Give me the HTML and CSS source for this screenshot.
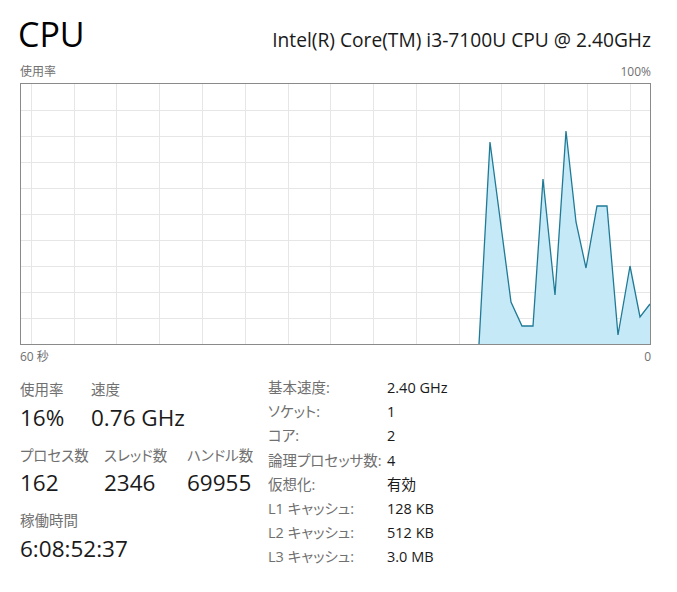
FILE: index.html
```html
<!DOCTYPE html>
<html lang="ja">
<head>
<meta charset="utf-8">
<title>CPU</title>
<link rel="stylesheet" href="styles.css">
</head>
<body>
<div class="page">
  <header class="title-row">
    <h1 class="title">CPU</h1>
    <div class="model">Intel(R) Core(TM) i3-7100U CPU @ 2.40GHz</div>
  </header>
  <div class="axis-row axis-top"><span>使用率</span><span>100%</span></div>
  <svg class="graph" width="631" height="262" viewBox="0 0 631 262">
    <g class="grid">
      <line x1="0" y1="27.5" x2="631" y2="27.5"/>
      <line x1="0" y1="53.5" x2="631" y2="53.5"/>
      <line x1="0" y1="79.5" x2="631" y2="79.5"/>
      <line x1="0" y1="105.5" x2="631" y2="105.5"/>
      <line x1="0" y1="131.5" x2="631" y2="131.5"/>
      <line x1="0" y1="157.5" x2="631" y2="157.5"/>
      <line x1="0" y1="183.5" x2="631" y2="183.5"/>
      <line x1="0" y1="209.5" x2="631" y2="209.5"/>
      <line x1="0" y1="235.5" x2="631" y2="235.5"/>
      <line x1="11.5" y1="0" x2="11.5" y2="262"/>
      <line x1="54.5" y1="0" x2="54.5" y2="262"/>
      <line x1="96.5" y1="0" x2="96.5" y2="262"/>
      <line x1="139.5" y1="0" x2="139.5" y2="262"/>
      <line x1="182.5" y1="0" x2="182.5" y2="262"/>
      <line x1="225.5" y1="0" x2="225.5" y2="262"/>
      <line x1="268.5" y1="0" x2="268.5" y2="262"/>
      <line x1="310.5" y1="0" x2="310.5" y2="262"/>
      <line x1="353.5" y1="0" x2="353.5" y2="262"/>
      <line x1="396.5" y1="0" x2="396.5" y2="262"/>
      <line x1="439.5" y1="0" x2="439.5" y2="262"/>
      <line x1="481.5" y1="0" x2="481.5" y2="262"/>
      <line x1="524.5" y1="0" x2="524.5" y2="262"/>
      <line x1="567.5" y1="0" x2="567.5" y2="262"/>
      <line x1="610.5" y1="0" x2="610.5" y2="262"/>
    </g>
    <polygon class="area" points="459,261 470,59 491,219 502,243 513,243 523,96 535,212 546,48 556,139 566,185 577,123 587,123 598,252 610,183 620,234 630,221 630,261"/>
    <polyline class="line" points="459,261 470,59 491,219 502,243 513,243 523,96 535,212 546,48 556,139 566,185 577,123 587,123 598,252 610,183 620,234 630,221"/>
    <rect class="frame" x="0.5" y="0.5" width="630" height="261"/>
  </svg>
  <div class="axis-row axis-bottom"><span>60 秒</span><span>0</span></div>
  <section class="stats">
    <div class="dynamic">
      <div class="stat-row">
        <div class="stat w71"><div class="lbl">使用率</div><div class="val">16%</div></div>
        <div class="stat"><div class="lbl">速度</div><div class="val">0.76 GHz</div></div>
      </div>
      <div class="stat-row">
        <div class="stat w84"><div class="lbl">プロセス数</div><div class="val">162</div></div>
        <div class="stat w83"><div class="lbl">スレッド数</div><div class="val">2346</div></div>
        <div class="stat"><div class="lbl">ハンドル数</div><div class="val">69955</div></div>
      </div>
      <div class="stat-row">
        <div class="stat"><div class="lbl">稼働時間</div><div class="val">6:08:52:37</div></div>
      </div>
    </div>
    <dl class="specs">
      <dt>基本速度:</dt><dd>2.40 GHz</dd>
      <dt>ソケット:</dt><dd>1</dd>
      <dt>コア:</dt><dd>2</dd>
      <dt>論理プロセッサ数:</dt><dd>4</dd>
      <dt>仮想化:</dt><dd>有効</dd>
      <dt>L1 キャッシュ:</dt><dd>128 KB</dd>
      <dt>L2 キャッシュ:</dt><dd>512 KB</dd>
      <dt>L3 キャッシュ:</dt><dd>3.0 MB</dd>
    </dl>
  </section>
</div>
</body>
</html>
```
FILE: styles.css
```css
html, body {
  margin: 0;
  padding: 0;
  background: #ffffff;
}
body {
  font-family: "Segoe UI", "Open Sans", "Noto Sans CJK JP", sans-serif;
  font-feature-settings: "palt";
  color: #1a1a1a;
}
.page {
  width: 631px;
  padding: 14px 0 0 20px;
}
.title-row {
  display: flex;
  justify-content: space-between;
  align-items: baseline;
  height: 40px;
}
.title {
  margin: 0 0 0 -2px;
  font-size: 34px;
  font-weight: 400;
  line-height: 40px;
  color: #000;
}
.model {
  font-size: 19.2px;
  line-height: 40px;
  color: #1a1a1a;
  white-space: nowrap;
}
.axis-row {
  display: flex;
  justify-content: space-between;
  font-size: 12px;
  line-height: 16px;
  height: 16px;
  color: #707070;
}
.axis-top {
  margin-top: 10px;
}
.graph {
  display: block;
  margin-top: 3px;
}
.grid line {
  stroke: #e6e6e6;
  stroke-width: 1;
}
.area {
  fill: #c6e9f8;
}
.line {
  fill: none;
  stroke: #1f7a96;
  stroke-width: 1.3;
  stroke-linejoin: miter;
}
.frame {
  fill: none;
  stroke: #8a8a8a;
  stroke-width: 1;
}
.axis-bottom {
  margin-top: 4px;
}
.stats {
  display: flex;
  margin-top: 11px;
}
.dynamic {
  width: 248px;
  padding-top: 4px;
  display: flex;
  flex-direction: column;
  gap: 13px;
}
.stat-row {
  display: flex;
}
.w71 { width: 71px; }
.w84 { width: 84px; }
.w83 { width: 83px; }
.lbl {
  font-size: 14.5px;
  line-height: 20px;
  color: #707070;
  white-space: nowrap;
}
.val {
  margin-top: 2.5px;
  font-size: 22.5px;
  line-height: 30px;
  color: #1a1a1a;
  white-space: nowrap;
}
.specs {
  margin: 0;
  display: grid;
  grid-template-columns: 119px auto;
  grid-auto-rows: 24.2px;
  font-size: 14.5px;
  line-height: 24px;
}
.specs dt {
  color: #707070;
  white-space: nowrap;
}
.specs dd {
  margin: 0;
  color: #1a1a1a;
  white-space: nowrap;
}
```
